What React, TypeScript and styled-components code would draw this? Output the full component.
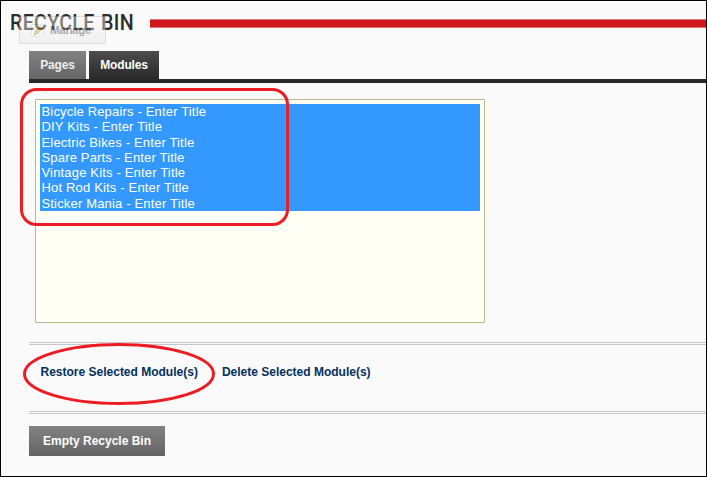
import React from "react";
import styled, { createGlobalStyle } from "styled-components";

const GlobalStyle = createGlobalStyle`
  * { box-sizing: border-box; }
  body { margin: 0; background: #fafafa; font-family: "Liberation Sans", Arial, sans-serif; }
  button { font-family: inherit; border: 0; margin: 0; white-space: nowrap; }
`;

const Page = styled.main`
  position: relative;
  width: 707px;
  height: 477px;
  border: 1px solid #000;
  background: #fafafa;
  overflow: hidden;
`;

const Header = styled.header`
  display: flex;
  height: 50px;
  padding: 8px 0 0 9px;
`;

const Title = styled.h1`
  flex: 0 0 140px;
  margin: 0;
  font: 500 21.5px/28px Roboto, sans-serif;
  letter-spacing: 0.3px;
  word-spacing: 1.5px;
  white-space: nowrap;
  color: #2c2c2c;
  transform: scaleX(0.915);
  transform-origin: 0 0;
`;

const TitleRule = styled.div`
  flex: 1;
  height: 9px;
  margin-top: 10px;
  background: #d0171c;
  border: solid #df7376;
  border-width: 1px 0;
`;

const ManageButton = styled.button`
  position: absolute;
  left: 18px;
  top: 15px;
  width: 87px;
  height: 28px;
  padding: 0 0 0 11px;
  display: flex;
  align-items: center;
  gap: 6px;
  border: 1px solid #b4b4b4;
  border-radius: 1px;
  background: linear-gradient(#fafafa, #e4e4e4);
  opacity: 0.4;
  font-size: 11.5px;
  font-weight: bold;
  letter-spacing: -0.3px;
  color: #333;
`;

const Body = styled.section`
  padding-left: 28px;
`;

const Tabs = styled.nav`
  display: flex;
  gap: 3px;
  height: 32px;
  border-bottom: 4px solid #292929;
`;

const Tab = styled.button<{ $active?: boolean }>`
  width: ${(p) => (p.$active ? 70 : 57)}px;
  height: 28px;
  padding: 0;
  font-size: 12px;
  font-weight: bold;
  line-height: 28px;
  letter-spacing: -0.15px;
  color: ${(p) => (p.$active ? "#fff" : "#eee")};
  background: ${(p) =>
    p.$active ? "linear-gradient(#4d4d4d, #292929)" : "linear-gradient(#828282, #666)"};
`;

const ModuleList = styled.ul`
  width: 450px;
  height: 224px;
  margin: 16px 0 19px 6px;
  padding: 4px;
  list-style: none;
  border: 1px solid #bdb68c;
  border-radius: 1px;
  background: #fffff5;
`;

const ModuleItem = styled.li`
  height: 15.286px;
  padding-left: 1.5px;
  font-size: 13px;
  line-height: 15.286px;
  letter-spacing: 0.17px;
  color: #fff;
  background: #3399ff;
`;

const Actions = styled.div`
  display: flex;
  gap: 24px;
  height: 72px;
  padding: 20px 0 0 11.5px;
  border: double #c8c8c8;
  border-width: 3px 0;
`;

const Action = styled.a`
  font-size: 12px;
  font-weight: bold;
  line-height: 14px;
  white-space: nowrap;
  color: #03305d;
`;

const EmptyButton = styled.button`
  display: block;
  width: 136px;
  height: 30px;
  margin-top: 12px;
  padding: 0;
  font-size: 12px;
  font-weight: bold;
  line-height: 30px;
  color: #fff;
  background: linear-gradient(#828282, #646464);
`;

const Annotations = styled.svg`
  position: absolute;
  left: -1px;
  top: -1px;
  pointer-events: none;
`;

const modules = [
  "Bicycle Repairs",
  "DIY Kits",
  "Electric Bikes",
  "Spare Parts",
  "Vintage Kits",
  "Hot Rod Kits",
  "Sticker Mania",
];

function EditIcon() {
  return (
    <svg width="13" height="13" viewBox="0 0 13 13">
      <path d="M.5.5h12v12H.5z" fill="#fff" stroke="#ccc" />
      <path d="M2 3h4M2 5h3M8 10h3" stroke="#bbb" />
      <path d="M3 11l1-4 5-5 3 2-6 6z" fill="#e3a93c" stroke="#a9833d" />
      <path d="M5 7l3 2M3 11l2-1" stroke="#555" />
    </svg>
  );
}

export default function App() {
  return (
    <Page>
      <GlobalStyle />
      <Header>
        <Title>RECYCLE BIN</Title>
        <TitleRule />
      </Header>
      <ManageButton>
        <EditIcon />
        Manage
      </ManageButton>
      <Body>
        <Tabs>
          <Tab>Pages</Tab>
          <Tab $active>Modules</Tab>
        </Tabs>
        <ModuleList>
          {modules.map((name) => (
            <ModuleItem key={name}>{name} - Enter Title</ModuleItem>
          ))}
        </ModuleList>
        <Actions>
          <Action>Restore Selected Module(s)</Action>
          <Action>Delete Selected Module(s)</Action>
        </Actions>
        <EmptyButton>Empty Recycle Bin</EmptyButton>
      </Body>
      <Annotations width="707" height="477" fill="none" stroke="#ed1c24" strokeWidth="3">
        <rect x="21.5" y="89.5" width="266" height="135" rx="15" />
        <ellipse cx="119" cy="374" rx="94.5" ry="29.5" />
      </Annotations>
    </Page>
  );
}
